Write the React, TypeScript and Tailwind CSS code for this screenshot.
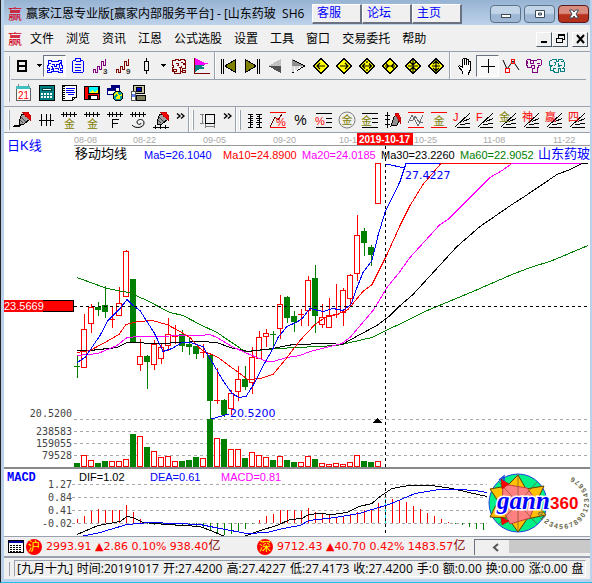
import type { ReactNode } from "react";
import clsx from "clsx";

type Candle = [high: number, top: number, bottom: number, low: number, color: "r" | "g", volume: number];

const UP = "#ff0000";
const DOWN = "#008000";

const STEP = 7;
const FIRST_X = 77;

const menuItems = ["文件", "浏览", "资讯", "江恩", "公式选股", "设置", "工具", "窗口", "交易委托", "帮助"];
const quickLinks = ["客服", "论坛", "主页"];

// high, top, bottom, low, direction, volume top
const candles: Candle[] = [
  [355, 366, 367, 378, "g", 463],
  [314, 329, 367, 367, "r", 455],
  [304, 307, 323, 332, "r", 460],
  [302, 307, 310, 316, "g", 463],
  [286, 305, 312, 318, "g", 461],
  [307, 319, 319, 327, "r", 461],
  [287, 303, 315, 315, "r", 461],
  [250, 251, 296, 296, "r", 459],
  [279, 279, 343, 343, "g", 434],
  [339, 356, 364, 370, "r", 436],
  [355, 356, 362, 389, "g", 447],
  [340, 344, 364, 369, "r", 451],
  [344, 347, 358, 363, "r", 457],
  [318, 334, 345, 350, "r", 456],
  [325, 336, 336, 343, "r", 461],
  [330, 334, 346, 352, "g", 461],
  [338, 344, 347, 355, "g", 460],
  [346, 346, 354, 359, "g", 457],
  [344, 352, 352, 357, "r", 458],
  [354, 355, 401, 419, "g", 419],
  [368, 400, 400, 403, "r", 438],
  [399, 400, 415, 417, "g", 439],
  [390, 393, 408, 414, "r", 449],
  [366, 379, 391, 400, "r", 449],
  [366, 379, 387, 390, "g", 458],
  [347, 357, 382, 393, "r", 452],
  [331, 337, 358, 358, "r", 455],
  [329, 333, 336, 346, "r", 457],
  [331, 334, 335, 348, "g", 460],
  [295, 304, 328, 338, "r", 456],
  [296, 297, 318, 323, "g", 460],
  [311, 316, 322, 332, "g", 462],
  [309, 314, 314, 325, "r", 462],
  [276, 280, 310, 325, "r", 456],
  [265, 278, 316, 333, "g", 459],
  [304, 317, 324, 327, "r", 463],
  [298, 315, 327, 327, "r", 464],
  [284, 314, 314, 317, "r", 463],
  [288, 290, 312, 325, "r", 464],
  [274, 275, 298, 305, "r", 462],
  [215, 235, 273, 280, "r", 455],
  [228, 231, 243, 256, "g", 461],
  [245, 247, 255, 266, "g", 462],
  [163, 163, 203, 203, "r", 461],
];

const averages = [
  {
    color: "#008000",
    points:
      "77,277 107,288 123,291 129,292 147,300 170,312 183,315 200,324 217,332 245,351 257,350 277,348 337,345 372,337 390,328 399,324 425,311 473,291 512,274 533,266 550,261 588,245",
  },
  {
    color: "#000000",
    points:
      "77,350 90,350 117,347 127,342 160,343 200,341 217,342 230,347 248,351 273,348 293,344 330,343 342,344 360,334 377,325 390,315 399,306 413,294 457,246 480,226 512,204 523,197 557,174 570,169 582,163 588,163",
  },
  {
    color: "#ff00ff",
    points:
      "77,355 98,353 117,345 127,337 140,336 200,335 210,334 217,337 232,346 245,352 257,357 267,361 273,361 287,357 300,355 310,351 342,343 350,337 362,323 373,310 378,302 387,287 400,271 410,257 440,224 448,219 490,177 502,170 512,163 581,163",
  },
  {
    color: "#ff0000",
    points:
      "77,352 90,350 103,343 119,334 126,324 138,321 152,320 167,324 180,331 190,337 200,348 203,350 218,357 233,368 248,379 260,378 273,374 287,357 300,340 315,324 325,317 337,314 348,309 363,291 372,284 387,254 400,225 410,205 423,184 441,163 511,163",
  },
  {
    color: "#0000ff",
    points:
      "77,362 85,357 100,335 108,320 115,313 120,308 127,299 133,305 140,310 154,332 157,338 163,351 172,348 182,342 190,342 203,346 210,358 223,380 232,393 239,397 246,396 253,385 265,362 273,348 278,337 287,326 298,321 303,317 310,308 323,311 333,308 343,310 351,304 357,287 363,272 372,260 378,235 385,212 400,181 406,163 440,163",
  },
];

const legend = [
  { text: "Ma5=26.1040", x: 144, fill: "#0000ff" },
  { text: "Ma10=24.8900", x: 223, fill: "#ff0000" },
  { text: "Ma20=24.0185", x: 302, fill: "#ff00ff" },
  { text: "Ma30=23.2260", x: 381, fill: "#000000" },
  { text: "Ma60=22.9052", x: 460, fill: "#008000" },
];

const dates = [
  { text: "08-08", x: 74 },
  { text: "08-22", x: 133 },
  { text: "09-05", x: 203 },
  { text: "09-20", x: 273 },
  { text: "10-1", x: 339 },
  { text: "10-25", x: 414 },
  { text: "11-08", x: 483 },
  { text: "11-22", x: 553 },
];

const priceGrid = [
  { text: "20.5200", y: 419 },
  { text: "238583", y: 431 },
  { text: "159055", y: 443 },
  { text: "79528", y: 455 },
];

const macdGrid = [
  { text: "1.27", y: 484 },
  { text: "0.84", y: 497 },
  { text: "0.41", y: 510 },
  { text: "-0.02", y: 523 },
];

const macdBars = [
  519, 516, 511, 509, 510, 510, 510, 505, 512, 519, 524, 525, 525, 525, 525, 526, 526, 526, 528, 531, 533, 535, 534,
  532, 529, 524, 520, 516, 514, 510, 510, 510, 511, 508, 512, 514, 515, 517, 516, 515, 512, 510, 510, 503, 499, 499,
  500, 502, 506, 509, 513, 516, 519, 522, 524, 525, 527, 529, 530,
];

const dif =
  "77,534 98,525 120,521 127,516 133,517 143,522 167,524 200,526 213,531 225,536 236,538 247,535 260,530 277,525 290,519 302,518 309,514 320,513 332,514 347,512 359,506 372,503 380,496 392,488 409,485 432,485 452,488 469,492 487,496";
const dea =
  "81,536 100,532 127,524 150,522 200,524 220,528 247,533 267,532 283,528 300,525 309,520 335,517 359,513 372,509 389,504 415,493 439,489 459,489 475,490 487,492";

const statusItems = [
  "[九月十九]",
  "时间:20191017",
  "开:27.4200",
  "高:27.4227",
  "低:27.4173",
  "收:27.4200",
  "手:0",
  "额:0.00",
  "换:0.00",
  "涨:0.00",
  "盘",
];

const sans = "font-['Liberation_Sans','Noto_Sans_CJK_SC',sans-serif]";
const mono = "font-['DejaVu_Sans_Mono','Noto_Sans_CJK_SC',monospace]";
const verdana = "font-['DejaVu_Sans','Noto_Sans_CJK_SC',sans-serif]";

function Icon({ children }: { children: ReactNode }) {
  return (
    <svg
      viewBox="0 0 20 20"
      className="h-5 w-5 shrink-0 font-['Liberation_Sans','Noto_Sans_CJK_SC',sans-serif]"
      fill="none"
      stroke="#000"
      shapeRendering="crispEdges"
    >
      {children}
    </svg>
  );
}

function ToolButton({ label, pressed, children }: { label: string; pressed?: boolean; children: ReactNode }) {
  return (
    <button
      type="button"
      aria-label={label}
      className={clsx(
        "flex h-[22px] w-[23px] shrink-0 items-center justify-center",
        pressed && "border border-t-gray-500 border-l-gray-500 border-r-white border-b-white bg-[#f8f8f8]"
      )}
    >
      {children}
    </button>
  );
}

function DropButton({ label, children }: { label: string; children: ReactNode }) {
  return (
    <button type="button" aria-label={label} className="flex h-[22px] w-8 shrink-0 items-center pl-px">
      {children}
      <svg viewBox="0 0 7 4" className="ml-1 h-1 w-[7px]" shapeRendering="crispEdges">
        <path d="M1 0h5v1h-1v1h-1v1h-1v-1h-1v-1h-1z" />
      </svg>
    </button>
  );
}

function Grip() {
  return <div className="mx-0.5 h-5 w-0.5 shrink-0 border-l border-white border-r border-r-gray-400" />;
}

function More() {
  return (
    <button type="button" aria-label="更多" className="flex h-[22px] w-4 shrink-0 justify-center pt-1">
      <svg viewBox="0 0 9 7" className="h-[7px] w-[9px]" fill="none" stroke="#000" strokeWidth="1.4">
        <path d="M1 .5l3 2.5-3 2.5M5 .5l3 2.5-3 2.5" />
      </svg>
    </button>
  );
}

function Wave({ color, digit }: { color: string; digit: string }) {
  return (
    <Icon>
      <path stroke={color} d="M2.500 17v-3.500h2v3h2v-6h2v3h2v-8h2v4h2v-7" />
      <text x="12" y="18" fontSize="8" fontWeight="bold" fill="#333" stroke="none">
        {digit}
      </text>
    </Icon>
  );
}

function Diamond({ d }: { d: string }) {
  return (
    <Icon>
      <path d="M10 2.500l7.500 7.500-7.500 7.500L2.500 10z" fill="#ffff00" />
      <path d={d} strokeWidth="1.200" shapeRendering="auto" />
    </Icon>
  );
}

// row of ticks on a horizontal rule, shared by the cycle tools
function Ruler({ children }: { children?: ReactNode }) {
  return (
    <Icon>
      <path d="M2 4.500h16M4.500 2v5M7.500 2v5M11.500 2v5M15.500 2v5" />
      {children}
    </Icon>
  );
}

function Glyph({ x, y, size, fill, children }: { x: number; y: number; size: number; fill: string; children: string }) {
  return (
    <text x={x} y={y} fontSize={size} fill={fill} stroke="none">
      {children}
    </text>
  );
}

function Fan({ glyph, color }: { glyph: string; color: string }) {
  return (
    <Icon>
      <path d="M3 17L18 3M5 17.500h13M8 14.500l10-1M11 11.500l7-3" />
      <Glyph x={1} y={11} size={11} fill={color}>
        {glyph}
      </Glyph>
    </Icon>
  );
}

function Pen({ tail }: { tail?: boolean }) {
  return (
    <>
      <path d="M6 11l3-7 5 1 3 4-6 5-5 1z" fill="#a0a0a0" />
      <path d="M10 2.500h5l2 3v4l-4-3z" fill="#ff0000" stroke="#c00000" />
      <path d="M8 7l5 5M7 10l3 3" stroke="#444" />
      {tail ? <path d="M2 17.500h16M4.500 15v4M9.500 15v4M14.500 15v4" /> : <path d="M1 17c2-3 4 2 6-2" strokeWidth="2" />}
    </>
  );
}

function TitleBar() {
  return (
    <header className="flex h-[25px] items-center bg-linear-to-b from-[#97b3d3] to-[#bdd2ea] pt-0.5 pr-px text-xs">
      <span className="ml-1 text-sm text-[#d00020]">赢</span>
      <h1 className="ml-1 w-[286px] whitespace-pre">赢家江恩专业版[赢家内部服务平台] - [山东药玻  SH6</h1>
      <nav className="flex">
        {quickLinks.map((link) => (
          <a
            key={link}
            href="#"
            className="flex h-5 w-[50px] items-center border-r-2 border-b-2 border-t border-l border-t-white border-l-white border-r-gray-500 border-b-gray-500 bg-[#f0f0f0] pl-1 text-[#0000ff]"
          >
            {link}
          </a>
        ))}
      </nav>
      <div className="ml-auto flex gap-[3px]">
        {["最小化", "还原", "关闭"].map((label, i) => (
          <button
            key={label}
            type="button"
            aria-label={label}
            className={clsx(
              "flex h-[18px] w-[31px] items-center justify-center rounded-sm border",
              i === 2
                ? "border-[#5b1a1a] bg-linear-to-b from-[#d98b7d] from-45% to-[#b5311c] to-55%"
                : "border-[#5d7389] bg-linear-to-b from-[#c2d4e8] from-45% to-[#9db7d4] to-55%"
            )}
          >
            <svg viewBox="0 0 12 10" className="h-2.5 w-3" fill="#fff" stroke="#3f4a57">
              {i === 0 && <rect x="1.500" y="5.500" width="9" height="3" />}
              {i === 1 && <path fillRule="evenodd" d="M1.500 1.500h9v7h-9zM4.500 4h3v2h-3z" />}
              {i === 2 && <path d="M1.500 1h3L6 3l1.500-2h3L8 5l2.500 4h-3L6 7 4.500 9h-3L4 5z" />}
            </svg>
          </button>
        ))}
      </div>
    </header>
  );
}

function MenuBar() {
  return (
    <div className="flex h-[27px] items-center border-b border-gray-400 bg-[#f0f0f0] pt-0.5 pr-0.5">
      <span className="ml-1 text-sm text-[#d00020]">赢</span>
      <nav className="ml-2 flex gap-3 text-xs">
        {menuItems.map((item) => (
          <button key={item} type="button">
            {item}
          </button>
        ))}
      </nav>
      <div className="ml-auto flex">
        {["最小化窗口", "还原窗口", "关闭窗口"].map((label, i) => (
          <button
            key={label}
            type="button"
            aria-label={label}
            className={clsx(
              "flex h-[15px] w-4 items-center justify-center border border-t-white border-l-white border-r-gray-600 border-b-gray-600",
              i === 2 && "ml-1"
            )}
          >
            <svg viewBox="0 0 11 10" className="h-2.5 w-[11px]" fill="none" stroke="#000" shapeRendering="crispEdges">
              {i === 0 && <path d="M2 8h6" strokeWidth="2" />}
              {i === 1 && <path d="M3.500 3.500v-3h6v5h-2M3.500 1h6M1.500 4.500h6v4h-6zM1.500 4h6" />}
              {i === 2 && <path d="M2 1l7 8M9 1l-7 8" strokeWidth="2" shapeRendering="auto" />}
            </svg>
          </button>
        ))}
      </div>
    </div>
  );
}

function MainToolbar() {
  return (
    <div className="flex h-[55px] items-stretch border-b border-gray-400 bg-[#f0f0f0]">
      <div className="my-1 mr-px ml-1 w-0.5 border-l border-white border-r border-r-gray-400" />
      <div className="min-w-0 flex-1">
        <div className="mr-1 flex h-7 items-center border-b border-gray-400">
          <DropButton label="日线">
            <Icon>
              <path d="M6 4v12M14 4v12M6 5h8M6 10h8M6 15h8" strokeWidth="2" />
            </Icon>
          </DropButton>
          <ToolButton label="图形叠加" pressed>
            <Icon>
              <path
                stroke="#0000ff"
                d="M3.500 6.500v-2h3v1h7v-1h3v2h-2M5.500 7.500h-2v2h-1v3h2v2h-2v2h4v-1h7v1h4v-2h-2v-2h2v-3h-1v-2h-3M6.500 8.500h3v2h2v-2h3v3M5.500 10.500h2v3h-2M9.500 12.500h4v1M8.500 12v3"
              />
            </Icon>
          </ToolButton>
          <ToolButton label="剪贴板">
            <Icon>
              <path stroke="#0000ff" d="M5.500 4.500h2v-2h5v2h2l1 1v10l-1 1h-9l-1-1v-10zM7.500 5.500h5M7 8.500h6M7 11.500h6M7 14.500h6" />
            </Icon>
          </ToolButton>
          <ToolButton label="三浪">
            <Wave color="#800080" digit="3" />
          </ToolButton>
          <ToolButton label="九浪">
            <Wave color="#800000" digit="9" />
          </ToolButton>
          <DropButton label="K线样式">
            <Icon>
              <path d="M8 5.500h4v9h-4zM10.500 2v3M10.500 15v3M8.500 5v10" />
            </Icon>
          </DropButton>
          <ToolButton label="八卦">
            <Icon>
              <path
                stroke="#800000"
                d="M3.500 4.500h3v-1h3v1h2v-1h4v1h1v3h-2v1h2v4h-3v2h3v2h-3v-1h-2v2h-6v-2h2v-2h-3v2h-1v-4h1v-2h-1zM6.500 7.500h3v2h-2M11.500 6.500h2M9.500 11.500h2v3M12.500 9.500v2"
              />
            </Icon>
          </ToolButton>
          <ToolButton label="筹码分布">
            <Icon>
              <path d="M3 2l10 5h4l-6 2H3z" fill="#ff00ff" stroke="none" />
              <path d="M3 9h10l-4 2 6 1-7 1-5 3z" fill="#008080" stroke="none" />
              <path stroke="#800000" d="M2.500 2v16M2 17.500h16" />
            </Icon>
          </ToolButton>
          <div className="mx-px h-full w-0.5 border-l border-gray-400 border-r border-r-white" />
          <ToolButton label="首页">
            <Icon>
              <path d="M2.500 3v15M4.500 3v15" />
              <path d="M16.500 3.500v13L6 10z" fill="#808000" />
            </Icon>
          </ToolButton>
          <ToolButton label="末页">
            <Icon>
              <path d="M15.500 3v15M17.500 3v15" />
              <path d="M3.500 3.500v13L14 10z" fill="#808000" />
            </Icon>
          </ToolButton>
          <ToolButton label="前一个">
            <Icon>
              <path d="M16 3v7H3z" fill="#c0c0c0" stroke="none" />
              <path d="M16 17v-7H3z" fill="#505050" stroke="none" />
            </Icon>
          </ToolButton>
          <ToolButton label="后一个">
            <Icon>
              <path d="M4 3v7h13z" fill="#909090" stroke="none" />
              <path d="M4 17v-7h13z" fill="#d8d8d8" stroke="none" />
              <path d="M5 4l12 6-13 7" />
              <path d="M6 11v5l7-5" stroke="#fff" />
            </Icon>
          </ToolButton>
          <ToolButton label="左移">
            <Diamond d="M6 10h8M9 7l-3 3 3 3" />
          </ToolButton>
          <ToolButton label="右移">
            <Diamond d="M6 10h8M11 7l3 3-3 3" />
          </ToolButton>
          <ToolButton label="放宽">
            <Diamond d="M5 10h10M8 7.500L5.500 10 8 12.500M12 7.500l2.500 2.500-2.500 2.500M10 5v2M10 13v2" />
          </ToolButton>
          <ToolButton label="收窄">
            <Diamond d="M5 10h10M6 7.500L8.500 10 6 12.500M14 7.500L11.500 10l2.500 2.500" />
          </ToolButton>
          <ToolButton label="压缩">
            <Diamond d="M10 4v12M5 10h10M7 6l3 3 3-3M7 14l3-3 3 3" />
          </ToolButton>
          <ToolButton label="展开">
            <Diamond d="M10 4v12M6 10h8M7 8l3-3 3 3M7 12l3 3 3-3" />
          </ToolButton>
          <div className="mx-0.5 h-full w-0.5 border-l border-gray-400 border-r border-r-white" />
          <ToolButton label="拖动">
            <Icon>
              <path
                fill="#fff"
                d="M7.500 17.500v-2l-4-5 1-1 3 2v-8l1-1 1 1v5-6h2v6-5h2v5-3h2v8l-2 4v1"
              />
            </Icon>
          </ToolButton>
          <ToolButton label="十字光标" pressed>
            <Icon>
              <path d="M10.500 3v14M3 10.500h14" />
            </Icon>
          </ToolButton>
          <ToolButton label="连线">
            <Icon>
              <path d="M2 4l4 9 6-8 6 9" shapeRendering="auto" />
              <path stroke="#ff0000" d="M4.500 12.500h4v4h-4zM10.500 3.500h3v4h-3z" />
            </Icon>
          </ToolButton>
          <ToolButton label="形态">
            <Icon>
              <path
                stroke="#800080"
                d="M2.500 4.500l1-1h3l1 1h5l1-1h3l1 1v4l-1 1h-2v2h-1v5h-5v-4h2v-3h-3v2h-4v-2h-1zM6.500 4v3h3v-2M12.500 7.500h3M3.500 5v3"
              />
            </Icon>
          </ToolButton>
          <ToolButton label="智能分析">
            <Icon>
              <path
                stroke="#008080"
                d="M5.500 3.500h4v2h2v-2h4l2 3v4l-2 2h2v3h-4v-3h-2v4h-4l-1-2h-3v-4l2-1h-3v-4zM6.500 6.500h2v2l-2 2M11.500 6.500v3h3M13.500 5.500h2M8.500 12.500h-2v2M10.500 10.500h2"
              />
            </Icon>
          </ToolButton>
        </div>
        <div className="mt-0.5 flex items-center">
          <ToolButton label="日历">
            <Icon>
              <path d="M3 5h14v12.500H3z" fill="#fff" stroke="#606060" />
              <path d="M3 4.500h14" stroke="#40c0c0" strokeWidth="3" />
              <path d="M5 1v3M15 1v3" stroke="#888" />
              <Glyph x={5} y={15.5} size={10} fill="#ff0000">
                21
              </Glyph>
            </Icon>
          </ToolButton>
          <ToolButton label="计算器">
            <Icon>
              <path d="M3 2.500h15v15H3z" fill="#008080" />
              <path d="M6 5h9v2H6z" fill="#e0ffff" stroke="#004040" />
              <path d="M5 11h11M5 14h11" stroke="#fff" strokeWidth="2" strokeDasharray="2 1" />
            </Icon>
          </ToolButton>
          <ToolButton label="记事本">
            <Icon>
              <path d="M3.500 2.500h14v11l-4 4h-10z" fill="#fff" />
              <path d="M4.500 3v14" strokeWidth="2" strokeDasharray="1 1" />
              <path d="M7 5.500h9M7 7.500h8M7 9.500h9M9 11.500h6" stroke="#0000ff" />
              <path d="M13.500 17v-3h4" />
            </Icon>
          </ToolButton>
          <ToolButton label="保存图片">
            <Icon>
              <path d="M2.500 3.500h15v13h-15z" fill="#ff0000" />
              <path d="M6 3.500h10v7H6z" fill="#00ffff" />
              <path d="M7 10l3-3 3 2 3-2v3z" fill="#ffff00" stroke="none" />
              <path d="M6 12.500h9v4H6z" fill="#fff" />
              <path d="M8 13v3" strokeWidth="2" />
            </Icon>
          </ToolButton>
          <ToolButton label="网络">
            <Icon>
              <path d="M6 2.500h8v7H6z" fill="#fff" stroke="#000080" />
              <path d="M2.500 5.500h8v6h-8z" fill="#fff" stroke="#000080" />
              <path d="M6 3.500h8M2.500 6.500h8" stroke="#000080" strokeWidth="2" />
              <circle cx="13" cy="13" r="5" fill="#00a0a0" />
              <path d="M9 12l3-2 2 3 3-1M11 16l2-2 2 2" stroke="#ffff00" strokeWidth="1.500" />
            </Icon>
          </ToolButton>
          <ToolButton label="数据下载">
            <Icon>
              <path d="M5 2.500h11v8H5z" fill="#c8c8a0" />
              <path d="M8 4.500h5v4H8z" fill="#0000c0" />
              <path d="M9 12h8v5H8z" fill="#808060" />
              <path d="M3.500 8.500h4v9h-4z" fill="#fff" stroke="#555" />
              <path d="M4 11h3v3H4z" fill="#6080ff" stroke="none" />
            </Icon>
          </ToolButton>
        </div>
      </div>
    </div>
  );
}

function DrawingToolbar() {
  return (
    <div className="flex h-[26px] items-center overflow-hidden border-b border-gray-400 bg-[#f0f0f0]">
      <div className="mr-px ml-1 h-5 w-0.5 shrink-0 border-l border-white border-r border-r-gray-400" />
      <ToolButton label="画笔">
        <Icon>
          <Pen />
        </Icon>
      </ToolButton>
      <ToolButton label="时间周期">
        <Icon>
          <path d="M3 10.500h15M5.500 4v12M10.500 4v12M14.500 4v12" />
        </Icon>
      </ToolButton>
      <ToolButton label="黄金周期">
        <Ruler>
          <Glyph x={5} y={18} size={11} fill="#808000">
            金
          </Glyph>
        </Ruler>
      </ToolButton>
      <ToolButton label="黄金分割周期">
        <Ruler>
          <Glyph x={5} y={18} size={11} fill="#808000">
            金
          </Glyph>
        </Ruler>
      </ToolButton>
      <ToolButton label="斐波那契周期">
        <Ruler>
          <path d="M7.500 17.500v-8h6M8 13.500h5" />
        </Ruler>
      </ToolButton>
      <ToolButton label="螺旋周期">
        <Ruler>
          <path d="M4 15c3 4 12 3 12-2s-7-4-7-1 4 3 4 1" shapeRendering="auto" />
        </Ruler>
      </ToolButton>
      <ToolButton label="画周期">
        <Icon>
          <Pen tail />
        </Icon>
      </ToolButton>
      <More />
      <div className="h-full w-0.5 shrink-0 border-l border-gray-400 border-r border-r-white" />
      <Grip />
      <ToolButton label="矩形">
        <Icon>
          <path d="M7.500 4.500h9v9h-9z" strokeWidth="1.500" />
          <path d="M2 4.500h4M2 13.500h4M4.500 4v10M8 16.500h9M7.500 14v4M16.500 14v4" stroke="#808080" />
        </Icon>
      </ToolButton>
      <More />
      <div className="h-full w-0.5 shrink-0 border-l border-gray-400 border-r border-r-white" />
      <Grip />
      <ToolButton label="价格标尺">
        <Icon>
          <path d="M5.500 4v14M14.500 4v14M3 4.500h5M3 8.500h5M3 12.500h5M3 17.500h5M11 4.500h6M11 8.500h6M11 12.500h6M11 17.500h6M6 6.500h2M6 10.500h2M6 14.500h2M12 6.500h2M12 10.500h2M12 14.500h2" />
        </Icon>
      </ToolButton>
      <ToolButton label="回撤比例">
        <Icon>
          <path stroke="#ff0000" d="M2 2.500h16M2 17.500h16" />
          <path d="M2 17l5-10 3 3 4-6" stroke="#600000" />
          <Glyph x={8} y={16} size={11} fill="#ff0000">
            %
          </Glyph>
        </Icon>
      </ToolButton>
      <ToolButton label="百分比">
        <span className="font-['Liberation_Sans',sans-serif] text-sm leading-none">%</span>
      </ToolButton>
      <ToolButton label="百分比线">
        <Icon>
          <path d="M2 3.500h16M12 8.500h6M12 12.500h6M2 17.500h16" />
          <Glyph x={1} y={15} size={11} fill="#ff0000">
            %
          </Glyph>
        </Icon>
      </ToolButton>
      <ToolButton label="黄金圆">
        <Icon>
          <circle cx="10" cy="10" r="8" stroke="#808080" shapeRendering="auto" />
          <Glyph x={4.5} y={14} size={11} fill="#808000">
            金
          </Glyph>
        </Icon>
      </ToolButton>
      <ToolButton label="黄金线">
        <Icon>
          <path d="M2 3.500h16M12 8.500h6M12 12.500h6M2 17.500h16" />
          <Glyph x={1} y={15} size={11} fill="#808000">
            金
          </Glyph>
        </Icon>
      </ToolButton>
      <ToolButton label="画价格线">
        <Icon>
          <path d="M4.500 2v16M2 5.500h5M2 9.500h5M2 14.500h5" />
          <path d="M8 16l3-9 3-3 3 5-3 6z" fill="#909090" />
          <path d="M12 4l3-1 2 4v5z" fill="#ff0000" stroke="#c00000" />
        </Icon>
      </ToolButton>
      <ToolButton label="波动通道">
        <Icon>
          <path stroke="#ff0000" d="M2 2.500h16M2 17.500h16" />
          <path stroke="#707070" d="M2 13l4-8 3 5 3 6 5-11M3 10h4l2-4 4 6h4" />
        </Icon>
      </ToolButton>
      <ToolButton label="黄金通道">
        <Icon>
          <path stroke="#ff0000" d="M2 2.500h16M2 17.500h16" />
          <Glyph x={4.5} y={15} size={11} fill="#808000">
            金
          </Glyph>
        </Icon>
      </ToolButton>
      <ToolButton label="江恩角度线">
        <Fan glyph="J" color="#ff0000" />
      </ToolButton>
      <ToolButton label="斐波那契角度线">
        <Fan glyph="F" color="#ff0000" />
      </ToolButton>
      <ToolButton label="黄金角度线">
        <Fan glyph="金" color="#808000" />
      </ToolButton>
      <ToolButton label="神奇角度线">
        <Fan glyph="神" color="#ff0000" />
      </ToolButton>
      <ToolButton label="赢家角度线">
        <Fan glyph="赢" color="#ff0000" />
      </ToolButton>
      <ToolButton label="四方角度线">
        <Fan glyph="四" color="#ff0000" />
      </ToolButton>
    </div>
  );
}

function CandleBar({ candle, index }: { candle: Candle; index: number }) {
  const [high, top, bottom, low, dir, volume] = candle;
  const x = FIRST_X + index * STEP;
  if (dir === "g") {
    return (
      <g fill={DOWN}>
        <rect x={x} y={high} width="1" height={low - high} />
        <rect x={x - 3} y={top} width="6" height={bottom - top} />
        <rect x={x - 3} y={volume} width="6" height={467 - volume} />
      </g>
    );
  }
  return (
    <g stroke={UP} fill="#fff">
      <path d={`M${x + 0.5} ${high}V${low + 1}`} />
      {top === bottom ? (
        <path d={`M${x - 3} ${top + 0.5}h6`} />
      ) : (
        <rect x={x - 2.5} y={top + 0.5} width="5" height={bottom - top} />
      )}
      <rect x={x - 2.5} y={volume + 0.5} width="5" height={466 - volume} />
    </g>
  );
}

function PriceChart() {
  return (
    <svg viewBox="4 133 586 334" className={clsx("block w-full bg-white text-[11px]", sans)} role="img" aria-label="日K线图">
      <g fontSize="9" fill="#a8a8a8">
        {dates.map((d) => (
          <text key={d.text} x={d.x} y="143">
            {d.text}
          </text>
        ))}
      </g>
      <path d="M74 145.500h516" stroke="#999" />
      <rect x="357" y="133" width="56" height="12" fill="#ff0000" />
      <text x="359" y="143" fontSize="10" fontWeight="bold" fill="#fff">
        2019-10-17
      </text>

      <text x="7" y="150" fontSize="13" fill="#0000ff">
        日K线
      </text>
      <text x="75" y="158" fontSize="13">
        移动均线
      </text>
      {legend.map((item) => (
        <text key={item.text} x={item.x} y="159" fill={item.fill}>
          {item.text}
        </text>
      ))}
      <text x="538" y="158" fontSize="13" fill="#0000ff">
        山东药玻
      </text>

      <g className={mono} fontSize="10" fill="#444" textAnchor="end">
        {priceGrid.map((g) => (
          <text key={g.text} x="72" y={g.y === 419 ? 417 : g.y + 4}>
            {g.text}
          </text>
        ))}
      </g>

      <g shapeRendering="crispEdges" fill="none">
        {priceGrid.map((g) => (
          <path key={g.text} d={`M74 ${g.y + 0.5}H588`} stroke="#a8a8a8" strokeDasharray="3 3" />
        ))}
        {candles.map((c, i) => (
          <CandleBar key={i} candle={c} index={i} />
        ))}
        {averages.map((line) => (
          <polyline key={line.color} points={line.points} stroke={line.color} transform="translate(0 .5)" />
        ))}
        <path d="M386 164l19 4M211 419l18-5" stroke="#0000ff" />
        <path d="M74 306.500H588M385.500 146V467" stroke="#000" strokeDasharray="3 3" />
        <path d="M373 423l4-5h1l4 5z" fill="#000" />
      </g>

      <g className={verdana} fill="#0000ff">
        <text x="405" y="179">
          27.4227
        </text>
        <text x="230" y="417">
          20.5200
        </text>
      </g>

      <rect x="4.500" y="300.500" width="69" height="11" fill="#ff0000" stroke="#000" />
      <rect x="4" y="300" width="39" height="12" fill="#ff0000" />
      <text x="4" y="310" fill="#fff">
        23.5669
      </text>
    </svg>
  );
}

const ringDigits = "0123456789012345676";

function GannLogo() {
  return (
    <g>
      <circle cx="518" cy="503" r="29" fill="#00f088" stroke="#2040e0" />
      <path d="M518 475l8 14 18-3-8 17 10 12-19 4-9 13-10-14-18-1 8-16-8-12 17-3z" fill="#ffc000" stroke="#604000" />
      <path d="M503 484l24 4 9 12-6 18-20 6-8-16z" fill="#ff8080" stroke="#c04040" />
      <path d="M518 474v58M499 482l38 42M537 482l-38 42" stroke="#805020" strokeWidth=".7" />
      <path d="M501 479l8 5-7 5zM501 517l8 4-7 4z" fill="#ff0000" stroke="#a00000" strokeWidth=".5" />
      <path d="M499 480l5-4v5" fill="none" stroke="#2040e0" strokeWidth="1.500" />
      <g className={sans} fontSize="7" fontWeight="bold" fill="#66664a">
        {ringDigits.split("").map((digit, i) => {
          const angle = 152 - i * 12;
          const rad = (angle * Math.PI) / 180;
          const x = 562 + 27 * Math.cos(rad);
          const y = 502 + 27 * Math.sin(rad);
          return (
            <text key={i} transform={`translate(${x} ${y}) rotate(${angle - 90})`} textAnchor="middle">
              {digit}
            </text>
          );
        })}
      </g>
      <text
        x="497"
        y="509"
        fontSize="25"
        fontWeight="bold"
        fontStyle="italic"
        fill="#0000ff"
        stroke="#fff"
        strokeWidth="3"
        paintOrder="stroke"
        className="font-['Liberation_Serif',serif]"
      >
        gann
      </text>
      <text x="550" y="509" fontSize="17" fontWeight="bold" fill="#ff0000" className={sans}>
        360
      </text>
    </g>
  );
}

function MacdChart() {
  return (
    <svg viewBox="4 469 586 67" className={clsx("block w-full bg-white text-[11px]", sans)} role="img" aria-label="MACD">
      <g shapeRendering="crispEdges" fill="none">
        {macdGrid.map((g) => (
          <path key={g.text} d={`M72 ${g.y + 0.5}H487`} stroke="#a8a8a8" strokeDasharray="3 3" />
        ))}
        {macdBars.map((y, i) => (
          <path
            key={i}
            d={`M${FIRST_X + i * STEP + 0.5} 523V${y}`}
            stroke={i === 44 ? "#00e0ff" : y > 523 ? DOWN : UP}
          />
        ))}
        <polyline points={dif} stroke="#000" transform="translate(0 .5)" />
        <polyline points={dea} stroke="#0000ff" transform="translate(0 .5)" />
        <path d="M385.500 482V536" stroke="#000" strokeDasharray="3 3" />
      </g>
      <text x="7" y="481" fontSize="12" fontWeight="bold" fill="#0000ff" className="font-['Liberation_Mono',monospace]">
        MACD
      </text>
      <text x="79" y="481">
        DIF=1.02
      </text>
      <text x="150" y="481" fill="#0000ff">
        DEA=0.61
      </text>
      <text x="221" y="481" fill="#ff00ff">
        MACD=0.81
      </text>
      <g className={mono} fontSize="10" fill="#444" textAnchor="end">
        {macdGrid.map((g) => (
          <text key={g.text} x="72" y={g.y + 4}>
            {g.text}
          </text>
        ))}
      </g>
      <GannLogo />
    </svg>
  );
}

function MarketBadge({ children }: { children: string }) {
  return (
    <span className="flex h-4 w-4 shrink-0 items-center justify-center rounded-full bg-[#ff0000] text-xs leading-none text-[#ffff00]">
      {children}
    </span>
  );
}

function IndexBar() {
  return (
    <div className={clsx("flex h-5 items-center border-t border-gray-400 bg-[#f0f0f0] text-[11px] text-[#ff0000]", verdana)}>
      <svg viewBox="0 0 16 13" className="mr-0.5 ml-1 h-[13px] w-4 shrink-0" shapeRendering="crispEdges">
        <rect x=".5" y=".5" width="15" height="12" fill="#fff" stroke="#000" />
        <rect x="1" y="1" width="14" height="2" fill="#0000a0" />
        <path d="M2 5.500h12M2 7.500h12M2 9.500h12M2 11.500h12" stroke="#000" strokeDasharray="2 1" />
      </svg>
      <MarketBadge>沪</MarketBadge>
      <p className="ml-1 w-[211px] shrink-0 whitespace-nowrap">
        2993.91 ▲2.86 0.10% 938.40<span className="text-xs text-[#800000]">亿</span>
      </p>
      <MarketBadge>深</MarketBadge>
      <p className="ml-1 w-[197px] shrink-0 whitespace-nowrap">
        9712.43 ▲40.70 0.42% 1483.57<span className="text-xs text-[#800000]">亿</span>
      </p>
      <div className="flex h-4 flex-1 border-t border-l border-gray-500">
        <button type="button" aria-label="向左滚动" className="flex h-full w-[34px] items-center justify-center pl-2">
          <svg viewBox="0 0 8 9" className="h-[9px] w-2" fill="none" stroke="#555" strokeWidth="2">
            <path d="M6 1L2 4.500 6 8" />
          </svg>
        </button>
        <div className="h-[13px] flex-1 bg-[#c9c9c9]" />
      </div>
    </div>
  );
}

function StatusBar() {
  return (
    <footer className="flex h-[23px] items-center border-t-2 border-gray-400 bg-[#f0f0f0] pr-1">
      <div className="mr-1 ml-1 h-3.5 w-0.5 border-r border-gray-400" />
      <div className="flex h-[17px] min-w-0 flex-1 items-center gap-1 overflow-hidden border border-t-gray-400 border-l-gray-400 border-r-white border-b-white pl-0.5 text-xs leading-none whitespace-nowrap">
        {statusItems.map((item) => (
          <span key={item} className="shrink-0">
            {item}
          </span>
        ))}
      </div>
    </footer>
  );
}

export default function App() {
  return (
    <div className="border-b border-l border-b-[#20c0e8] border-l-[#202020] bg-[#b9d1ea] pr-0.5 pb-[3px] pl-[3px] font-['Open_Sans','Noto_Sans_CJK_SC',sans-serif] text-black">
      <TitleBar />
      <MenuBar />
      <MainToolbar />
      <DrawingToolbar />
      <PriceChart />
      <div className="h-0.5 bg-[#888]" />
      <MacdChart />
      <IndexBar />
      <StatusBar />
    </div>
  );
}
